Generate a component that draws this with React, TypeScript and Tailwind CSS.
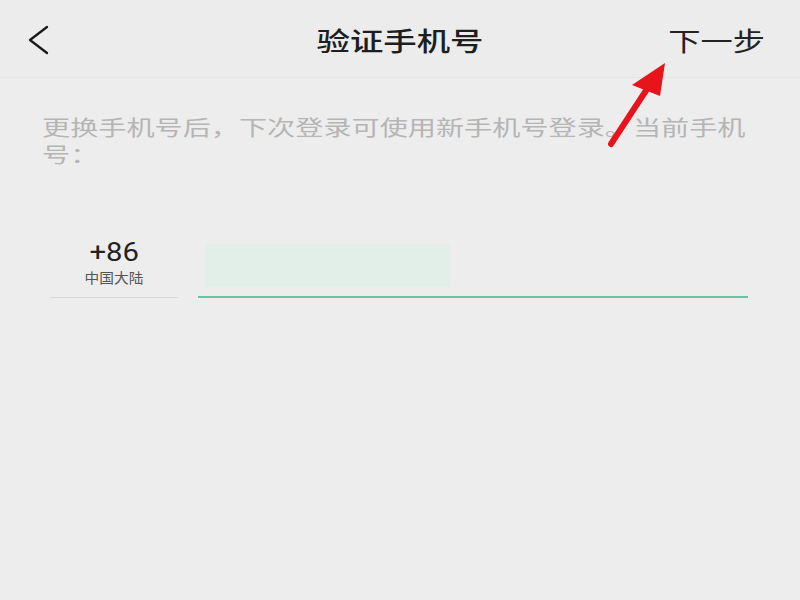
import React from "react";

const cjk = { fontFamily: '"Noto Sans CJK SC", "Noto Sans", sans-serif' };
const latin = { fontFamily: 'Roboto, "Noto Sans CJK SC", sans-serif' };

export default function App() {
  return (
    <div className="relative w-[800px] h-[600px] overflow-hidden bg-[#ededed]" style={cjk}>
      {/* Header */}
      <div className="h-[78px] pt-[3px] grid grid-cols-[1fr_auto_1fr] items-center border-b border-[#e5e5e5] bg-[#ececec]">
        <div className="pl-[27px] flex items-center">
          <svg width="24" height="30" viewBox="0 0 24 30">
            <polyline points="20,2 3,15 20,28" fill="none" stroke="#1a1a1a" strokeWidth="2.3" strokeLinecap="round" strokeLinejoin="round" />
          </svg>
        </div>
        <div className="text-[26px] leading-[32px] font-medium text-[#1e1e1e] scale-x-[1.285] origin-center whitespace-nowrap">
          验证手机号
        </div>
        <div className="justify-self-end pr-[35px]">
          <div className="text-[26px] leading-[32px] text-[#232323] scale-x-[1.24] origin-right whitespace-nowrap">
            下一步
          </div>
        </div>
      </div>

      {/* Description */}
      <div className="pt-[35px] pl-[42px] text-[21px] leading-[27px] text-[#b5b5b5]">
        <div className="scale-x-[1.34] origin-left whitespace-nowrap">
          更换手机号后，下次登录可使用新手机号登录。当前手机
        </div>
        <div className="scale-x-[1.34] origin-left whitespace-nowrap">号：</div>
      </div>

      {/* Phone row */}
      <div className="mt-[73px] pl-[50px] pr-[52px] flex items-stretch">
        <div className="w-[128px] flex flex-col items-center pb-[11px] border-b border-[#d8d8d8]">
          <div className="text-[25px] leading-[25px] text-[#222] scale-x-[1.17]" style={latin}>
            +86
          </div>
          <div className="mt-[3px] text-[14px] leading-[18px] text-[#555] scale-x-[1.05]">
            中国大陆
          </div>
        </div>
        <div className="flex-1 ml-[20px] border-b-2 border-[#63c7a1]">
          <div className="ml-[7px] mt-[4px] w-[245px] h-[43px] bg-[#e2efe9]" />
        </div>
      </div>

      {/* Red arrow annotation */}
      <svg className="absolute inset-0 pointer-events-none" width="800" height="600" viewBox="0 0 800 600">
        <line x1="611" y1="144" x2="649" y2="86" stroke="#e8141b" strokeWidth="6" strokeLinecap="round" />
        <polygon points="665,63 632,85 660,96" fill="#e8141b" />
      </svg>
    </div>
  );
}
